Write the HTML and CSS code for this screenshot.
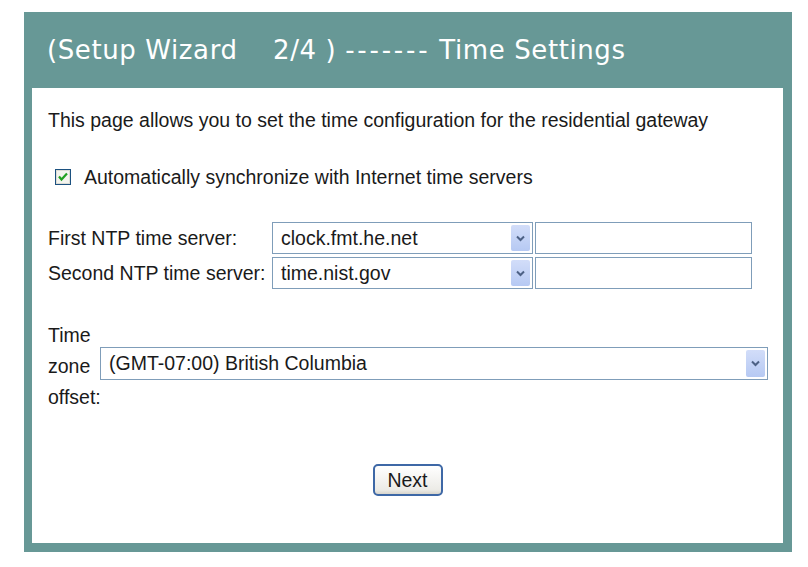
FILE: index.html
```html
<!DOCTYPE html>
<html lang="en">
<head>
    <meta charset="UTF-8">
    <title>Setup Wizard - Time Settings</title>
    <link rel="stylesheet" href="styles.css">
</head>
<body>

<div class="wizard">
    <div class="wizard-title">(Setup Wizard    2/4 ) <span class="dashes">-------</span> Time Settings</div>

    <div class="wizard-body">
        <p class="intro">This page allows you to set the time configuration for the residential gateway</p>

        <label class="sync">
            <span class="check">
                <svg width="16" height="16" viewBox="0 0 16 16">
                    <rect x="0.5" y="0.5" width="15" height="15" fill="#f4f4ee" stroke="#1c5180"/>
                    <rect x="1.5" y="1.5" width="13" height="13" fill="none" stroke="#dcdcd4"/>
                    <path d="M4 7.5 L6.5 10.5 L12 4.5" fill="none" stroke="#21a121" stroke-width="2.2"/>
                </svg>
            </span>
            Automatically synchronize with Internet time servers
        </label>

        <div class="ntp-rows">
            <div class="ntp-row">
                <span class="ntp-label">First NTP time server:</span>
                <div class="combo ntp-select">
                    <span class="combo-text">clock.fmt.he.net</span>
                    <span class="combo-arrow">
                        <svg width="9" height="7" viewBox="0 0 9 7"><path d="M1 1.5 L4.5 5 L8 1.5" fill="none" stroke="#4d6185" stroke-width="2"/></svg>
                    </span>
                </div>
                <div class="textbox"></div>
            </div>
            <div class="ntp-row">
                <span class="ntp-label">Second NTP time server:</span>
                <div class="combo ntp-select">
                    <span class="combo-text">time.nist.gov</span>
                    <span class="combo-arrow">
                        <svg width="9" height="7" viewBox="0 0 9 7"><path d="M1 1.5 L4.5 5 L8 1.5" fill="none" stroke="#4d6185" stroke-width="2"/></svg>
                    </span>
                </div>
                <div class="textbox"></div>
            </div>
        </div>

        <div class="tz-row">
            <span class="tz-label">Time<br>zone<br>offset:</span>
            <div class="combo tz-select">
                <span class="combo-text">(GMT-07:00) British Columbia</span>
                <span class="combo-arrow">
                    <svg width="9" height="7" viewBox="0 0 9 7"><path d="M1 1.5 L4.5 5 L8 1.5" fill="none" stroke="#4d6185" stroke-width="2"/></svg>
                </span>
            </div>
        </div>

        <div class="actions">
            <button class="next-btn">Next</button>
        </div>
    </div>
</div>

</body>
</html>
```

FILE: styles.css
```css
body {
    margin: 0;
    background: white;
    font-family: "Liberation Sans", Arial, sans-serif;
    color: #1a1a1a;
}
.wizard {
    width: 768px;
    margin: 12px 0 0 24px;
    background: #679896;
    padding: 0 9px 9px 8px;
    box-sizing: border-box;
}
.wizard-title {
    height: 76px;
    line-height: 76px;
    padding-left: 15px;
    color: white;
    font-family: "DejaVu Sans", Verdana, sans-serif;
    font-size: 26px;
    letter-spacing: 0.6px;
    white-space: pre;
}
.dashes {
    letter-spacing: 2.8px;
}
.wizard-body {
    background: white;
    height: 455px;
    padding: 0 0 0 16px;
    box-sizing: border-box;
    font-size: 19.5px;
    overflow: hidden;
}
.intro {
    margin: 0;
    padding-top: 22px;
    line-height: 20px;
}
.sync {
    display: flex;
    align-items: center;
    gap: 13px;
    margin: 37px 0 0 7px;
    line-height: 20px;
}
.check {
    display: flex;
}
.ntp-rows {
    margin-top: 35px;
    display: flex;
    flex-direction: column;
    gap: 3px;
}
.ntp-row {
    display: flex;
    align-items: center;
}
.ntp-label {
    width: 224px;
}
.combo {
    display: flex;
    align-items: center;
    height: 32px;
    border: 1px solid #7f9db9;
    box-sizing: border-box;
    background: white;
    padding: 2px;
}
.combo-text {
    flex: 1;
    padding-left: 6px;
}
.combo-arrow {
    width: 19px;
    height: 100%;
    display: flex;
    align-items: center;
    justify-content: center;
    background: linear-gradient(#d2ddf9, #b6c9f3);
    border-radius: 2px;
}
.ntp-select {
    width: 261px;
}
.textbox {
    width: 217px;
    height: 32px;
    margin-left: 2px;
    border: 1px solid #7f9db9;
    box-sizing: border-box;
}
.tz-row {
    display: flex;
    align-items: center;
    margin-top: 31px;
}
.tz-label {
    width: 52px;
    line-height: 31px;
}
.tz-select {
    width: 668px;
    height: 33px;
    margin-top: -7px;
}
.actions {
    text-align: center;
    margin-top: 51px;
    padding-right: 16px;
}
.next-btn {
    font-family: "Liberation Sans", Arial, sans-serif;
    font-size: 19.5px;
    color: #1a1a1a;
    width: 70px;
    height: 32px;
    border: 2px solid #3e68a6;
    border-radius: 5px;
    background: linear-gradient(#ffffff, #ecebe6 85%, #d8d5cc);
    padding: 0;
}
```
